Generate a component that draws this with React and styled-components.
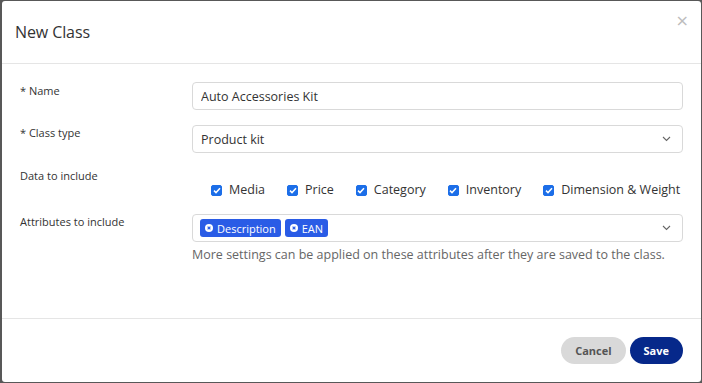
import React, { useState } from "react";
import styled, { createGlobalStyle } from "styled-components";

const GlobalStyle = createGlobalStyle`
  * { box-sizing: border-box; }
  html, body {
    margin: 0;
    padding: 0;
    background: #585858;
    font-family: "Open Sans", "Noto Sans", sans-serif;
    color: #333;
  }
`;

const Backdrop = styled.div`
  padding: 1px 1px 1px 2px;
  height: 383px;
`;

const Modal = styled.div`
  background: #fff;
  height: 381px;
  border-radius: 3px;
  display: flex;
  flex-direction: column;
`;

const Header = styled.div`
  height: 63px;
  border-bottom: 1px solid #e5e5e5;
  display: flex;
  align-items: center;
  padding: 0 14px 0 13px;
  position: relative;
`;

const Title = styled.h2`
  margin: 0;
  font-size: 16px;
  font-weight: 400;
  color: #333;
  letter-spacing: -0.1px;
`;

const Close = styled.button`
  position: absolute;
  top: 12px;
  right: 12px;
  border: none;
  background: none;
  padding: 0;
  color: #bdbdbd;
  font-size: 16px;
  line-height: 16px;
  cursor: pointer;
  font-family: "DejaVu Sans", sans-serif;
`;

const Body = styled.div`
  flex: 1;
  padding: 18px 18px 0 18px;
  display: flex;
  flex-direction: column;
  gap: 15px;
`;

const Row = styled.div`
  display: flex;
  align-items: flex-start;
`;

const Label = styled.div`
  width: 172px;
  flex-shrink: 0;
  font-size: 11px;
  line-height: 14px;
  padding-top: ${(p) => p.$top || 1}px;
  color: #333;
`;

const Field = styled.div`
  flex: 1;
  min-width: 0;
  display: flex;
  flex-direction: column;
`;

const Input = styled.input`
  height: 28px;
  border: 1px solid #d9d9d9;
  border-radius: 4px;
  padding: 0 8px;
  font-family: inherit;
  font-size: 12.5px;
  color: #333;
  outline: none;
  width: 100%;
`;

const SelectBox = styled.div`
  height: 28px;
  border: 1px solid #d9d9d9;
  border-radius: 4px;
  padding: 0 11px 0 ${(p) => p.$pl || 8}px;
  display: flex;
  align-items: center;
  gap: 4px;
  font-size: 12.5px;
  color: #333;
`;

const SelectValue = styled.span`
  flex: 1;
  display: flex;
  gap: 4px;
  align-items: center;
`;

const Chevron = () => (
  <svg width="9" height="6" viewBox="0 0 9 6" fill="none">
    <path d="M1 1l3.5 3.5L8 1" stroke="#666" strokeWidth="1.1" />
  </svg>
);

const CheckGroup = styled.div`
  display: flex;
  gap: 22px;
  padding: 13px 0 0 19px;
  white-space: nowrap;
`;

const CheckItem = styled.label`
  display: flex;
  align-items: center;
  gap: 7px;
  font-size: 12.5px;
  line-height: 18px;
  color: #333;
  cursor: pointer;
`;

const Box = styled.span`
  width: 11px;
  height: 11px;
  border-radius: 2px;
  background: ${(p) => (p.$on ? "#1c6ee8" : "#fff")};
  border: 1px solid ${(p) => (p.$on ? "#1c6ee8" : "#999")};
  display: flex;
  align-items: center;
  justify-content: center;
`;

const Tag = styled.span`
  display: inline-flex;
  align-items: center;
  gap: 4px;
  height: 18px;
  padding: 0 5px 0 5px;
  background: #2a5ce6;
  color: #fff;
  border-radius: 3px;
  font-size: 11px;
`;

const Help = styled.div`
  font-size: 12.5px;
  line-height: 16px;
  color: #666;
  margin-top: 5px;
  white-space: nowrap;
`;

const Footer = styled.div`
  height: 64px;
  border-top: 1px solid #e5e5e5;
  display: flex;
  align-items: center;
  justify-content: flex-end;
  gap: 4px;
  padding: 0 18px 1px 0;
`;

const Button = styled.button`
  height: 27px;
  border: none;
  border-radius: 14px;
  padding: 0 14px;
  font-family: inherit;
  font-size: 11px;
  font-weight: 700;
  background: ${(p) => (p.$primary ? "#06288a" : "#d9d9d9")};
  color: ${(p) => (p.$primary ? "#fff" : "#555")};
  cursor: pointer;
`;

const CheckMark = () => (
  <svg width="8" height="7" viewBox="0 0 8 7" fill="none">
    <path d="M1 3.6l2 2L7 1.2" stroke="#fff" strokeWidth="1.5" />
  </svg>
);

const TagClose = () => (
  <svg width="8" height="8" viewBox="0 0 8 8">
    <circle cx="4" cy="4" r="4" fill="#fff" />
    <path d="M2.6 2.6l2.8 2.8M5.4 2.6L2.6 5.4" stroke="#2a5ce6" strokeWidth="1.2" />
  </svg>
);

const dataOptions = ["Media", "Price", "Category", "Inventory", "Dimension & Weight"];

export default function App() {
  const [name, setName] = useState("Auto Accessories Kit");
  const [checked, setChecked] = useState(dataOptions);

  const toggle = (o) =>
    setChecked((c) => (c.includes(o) ? c.filter((x) => x !== o) : [...c, o]));

  return (
    <>
      <GlobalStyle />
      <Backdrop>
        <Modal>
          <Header>
            <Title>New Class</Title>
            <Close>×</Close>
          </Header>
          <Body>
            <Row>
              <Label $top={2}>* Name</Label>
              <Field>
                <Input value={name} onChange={(e) => setName(e.target.value)} />
              </Field>
            </Row>
            <Row>
              <Label $top={1}>* Class type</Label>
              <Field>
                <SelectBox>
                  <SelectValue>Product kit</SelectValue>
                  <Chevron />
                </SelectBox>
              </Field>
            </Row>
            <Row>
              <Label $top={1}>Data to include</Label>
              <Field>
                <CheckGroup>
                  {dataOptions.map((o) => (
                    <CheckItem key={o} onClick={() => toggle(o)}>
                      <Box $on={checked.includes(o)}>
                        {checked.includes(o) && <CheckMark />}
                      </Box>
                      {o}
                    </CheckItem>
                  ))}
                </CheckGroup>
              </Field>
            </Row>
            <Row>
              <Label $top={0}>Attributes to include</Label>
              <Field>
                <SelectBox $pl={7}>
                  <SelectValue>
                    <Tag>
                      <TagClose />
                      Description
                    </Tag>
                    <Tag>
                      <TagClose />
                      EAN
                    </Tag>
                  </SelectValue>
                  <Chevron />
                </SelectBox>
                <Help>
                  More settings can be applied on these attributes after they are saved to the class.
                </Help>
              </Field>
            </Row>
          </Body>
          <Footer>
            <Button>Cancel</Button>
            <Button $primary>Save</Button>
          </Footer>
        </Modal>
      </Backdrop>
    </>
  );
}
